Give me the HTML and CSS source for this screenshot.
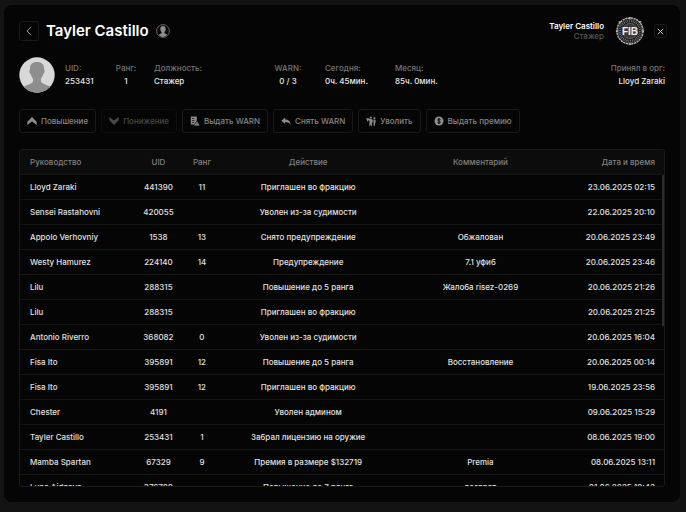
FILE: index.html
```html
<!DOCTYPE html>
<html lang="ru">
<head>
	<meta charset="utf-8">
	<meta name="viewport" content="width=device-width, initial-scale=1">
	<title>Tayler Castillo</title>
	<link rel="stylesheet" href="styles.css">
</head>
<body>
	<main class="panel">
		<!-- top line: back button, name, current user -->
		<header class="top">
			<button class="square back" type="button" aria-label="Назад">
				<svg width="8" height="10" viewBox="0 0 8 10"><path d="M6 1L2 5l4 4" fill="none" stroke="#999" stroke-width="1"/></svg>
			</button>
			<h1 class="title">Tayler Castillo</h1>
			<svg class="badge" width="14" height="14" viewBox="0 0 14 14">
				<circle cx="7" cy="7" r="6.4" fill="none" stroke="#666" stroke-width="1"/>
				<path d="M7 2c2 0 2.9 1.300 2.700 3.200-.1 1.400-.6 2.300-1.200 2.900v1.200l2.700 1.300c-1 1.500-2.500 2.400-4.200 2.400s-3.200-.9-4.200-2.400l2.700-1.300V8.100c-.6-.6-1.100-1.500-1.200-2.900C4.100 3.300 5 2 7 2z" fill="#8d8d8d"/>
			</svg>
			<div class="me">
				<div class="me-name">Tayler Castillo</div>
				<div class="me-rank">Стажер</div>
			</div>
			<svg class="emblem" width="30" height="30" viewBox="0 0 30 30">
				<circle cx="15" cy="15" r="13" fill="none" stroke="#b4b4b4" stroke-width="1.500" stroke-dasharray="2.200 .6"/>
				<circle cx="15" cy="15" r="11.600" fill="#111" stroke="#777" stroke-width=".6"/>
				<circle cx="15" cy="15" r="9.800" fill="none" stroke="#8a8a8a" stroke-width="2" stroke-dasharray=".8 1"/>
				<circle cx="15" cy="15" r="7.600" fill="#3a3a3a" stroke="#999" stroke-width="1" stroke-dasharray="1 .7"/>
				<path d="M15 .5l1.200 2h-2.400zM15 29.500l1.200-2h-2.400zM.5 15l2-1.200v2.400zM29.500 15l-2-1.200v2.400zM3 6l2-1 1 2zM27 6l-2-1-1 2z" fill="#ccc"/>
				<text class="emblem-text" x="15" y="19" text-anchor="middle">FIB</text>
			</svg>
			<button class="square close" type="button" aria-label="Закрыть">
				<svg width="7" height="7" viewBox="0 0 7 7"><path d="M.8.8l5.400 5.400M6.200.8L.8 6.200" stroke="#ccc" stroke-width="1"/></svg>
			</button>
		</header>

		<!-- employee info -->
		<section class="info">
			<svg class="avatar" width="36" height="36" viewBox="0 0 36 36">
				<defs><clipPath id="round"><circle cx="18" cy="18" r="17.700"/></clipPath></defs>
				<g clip-path="url(#round)">
					<path d="M0 0h36v36H0z" fill="#d8d8d8"/>
					<path d="M18 5c5 0 7.400 2.600 7 7.500.8.300.7 1.500.4 2.700-.2.900-.6 1.700-1.200 1.800-.4 2-1.200 3.500-2.200 4.600v3c.5 2 5 3.200 9 4.900V37H5v-7.500c4-1.700 8.500-2.900 9-4.900v-3c-1-1.100-1.800-2.600-2.200-4.600-.6-.1-1-.9-1.200-1.800-.3-1.200-.4-2.400.4-2.700-.4-4.900 2-7.500 7-7.500z" fill="#8e8e8e"/>
				</g>
			</svg>
			<dl class="stats">
				<div class="stat uid"><dt>UID:</dt><dd>253431</dd></div>
				<div class="stat rank"><dt>Ранг:</dt><dd>1</dd></div>
				<div class="stat post"><dt>Должность:</dt><dd>Стажер</dd></div>
				<div class="stat warn"><dt>WARN:</dt><dd>0 / 3</dd></div>
				<div class="stat today"><dt>Сегодня:</dt><dd>0ч. 45мин.</dd></div>
				<div class="stat month"><dt>Месяц:</dt><dd>85ч. 0мин.</dd></div>
				<div class="stat invited"><dt>Принял в орг:</dt><dd>Lloyd Zaraki</dd></div>
			</dl>
		</section>

		<!-- actions -->
		<nav class="actions">
			<button class="action" type="button">
				<svg width="10" height="10" viewBox="0 0 10 10"><path d="M5 1l4.700 4.700V9L5 5.600.3 9V5.700z" fill="#8b8b8b"/></svg>
				Повышение
			</button>
			<button class="action" type="button" disabled>
				<svg width="10" height="10" viewBox="0 0 10 10"><path d="M5 9L.3 4.300V1L5 4.400 9.700 1v3.300z" fill="#8b8b8b"/></svg>
				Понижение
			</button>
			<button class="action" type="button">
				<svg width="10" height="10" viewBox="0 0 10 10"><path d="M.8.500h6v4.300L4.500 8.500H.8z" fill="#8b8b8b"/><path d="M2 2.500h2M2 4.500h2.500M2 6.500h2" stroke="#050505" stroke-width=".7"/><path d="M6.900 4.700L10 9.800H3.800z" fill="#999" stroke="#050505" stroke-width=".5"/><path d="M6.900 6.500v1.500M6.900 8.500v.6" stroke="#050505" stroke-width=".6"/></svg>
				Выдать WARN
			</button>
			<button class="action" type="button">
				<svg width="10" height="10" viewBox="0 0 10 10"><path d="M4.200 1.500v2C7.500 3.500 9.500 5.500 9.600 9 8.500 7 7 6.100 4.200 6.100v2L.3 4.800z" fill="#8b8b8b"/></svg>
				Снять WARN
			</button>
			<button class="action" type="button">
				<svg width="10" height="10" viewBox="0 0 10 10"><circle cx="4.800" cy="1.500" r="1.100" fill="#8b8b8b"/><path d="M.2 2.200h2.500L4 3h1.600l1.100 1v2.200h-.6V9.800H5V6.900L4.300 9.800H3.100l.5-5.100L2.200 4.200v1H1V3.500H.2zM7.500 1.200h1.800v2.200H7.500zM7.400 4h2.100v3H9v2.800H7.700z" fill="#8b8b8b"/></svg>
				Уволить
			</button>
			<button class="action" type="button">
				<svg width="10" height="10" viewBox="0 0 10 10"><circle cx="5" cy="5" r="4.500" fill="#8b8b8b"/><path d="M6.500 3.400C5.900 2.800 3.700 2.700 3.700 4c0 1.200 2.700.8 2.700 2 0 1.300-2.200 1.200-2.900.5M5 2v6" fill="none" stroke="#050505" stroke-width=".9"/></svg>
				Выдать премию
			</button>
		</nav>

		<!-- history -->
		<section class="history">
			<table class="log">
				<thead>
					<tr><th class="c-name">Руководство</th><th class="c-uid">UID</th><th class="c-rank">Ранг</th><th class="c-act">Действие</th><th class="c-note">Комментарий</th><th class="c-date">Дата и время</th></tr>
				</thead>
				<tbody>
					<tr><td>Lloyd Zaraki</td><td>441390</td><td>11</td><td>Приглашен во фракцию</td><td></td><td>23.06.2025 02:15</td></tr>
					<tr><td>Sensei Rastahovni</td><td>420055</td><td></td><td>Уволен из-за судимости</td><td></td><td>22.06.2025 20:10</td></tr>
					<tr><td>Appolo Verhovniy</td><td>1538</td><td>13</td><td>Снято предупреждение</td><td>Обжалован</td><td>20.06.2025 23:49</td></tr>
					<tr><td>Westy Hamurez</td><td>224140</td><td>14</td><td>Предупреждение</td><td>7.1 уфиб</td><td>20.06.2025 23:46</td></tr>
					<tr><td>Lilu</td><td>288315</td><td></td><td>Повышение до 5 ранга</td><td>Жалоба risez-0269</td><td>20.06.2025 21:26</td></tr>
					<tr><td>Lilu</td><td>288315</td><td></td><td>Приглашен во фракцию</td><td></td><td>20.06.2025 21:25</td></tr>
					<tr><td>Antonio Riverro</td><td>368082</td><td>0</td><td>Уволен из-за судимости</td><td></td><td>20.06.2025 16:04</td></tr>
					<tr><td>Fisa Ito</td><td>395891</td><td>12</td><td>Повышение до 5 ранга</td><td>Восстановление</td><td>20.06.2025 00:14</td></tr>
					<tr><td>Fisa Ito</td><td>395891</td><td>12</td><td>Приглашен во фракцию</td><td></td><td>19.06.2025 23:56</td></tr>
					<tr><td>Chester</td><td>4191</td><td></td><td>Уволен админом</td><td></td><td>09.06.2025 15:29</td></tr>
					<tr><td>Tayler Castillo</td><td>253431</td><td>1</td><td>Забрал лицензию на оружие</td><td></td><td>08.06.2025 19:00</td></tr>
					<tr><td>Mamba Spartan</td><td>67329</td><td>9</td><td>Премия в размере $132719</td><td>Premia</td><td>08.06.2025 13:11</td></tr>
					<tr><td>Luna Aidzava</td><td>376780</td><td></td><td>Повышение до 7 ранга</td><td>возврат</td><td>01.06.2025 18:43</td></tr>
				</tbody>
			</table>
			<div class="thumb"></div>
		</section>
	</main>
</body>
</html>
```

FILE: styles.css
```css
* {
	box-sizing: border-box;
}
body {
	margin: 0;
	height: 100vh;
	padding: 5px 6px 10px 4px;
	background-color: #131313;
	color: #e0e0e0;
	font-family: Inter, Roboto, sans-serif;
	font-size: 8px;
	font-weight: 500;
	line-height: 12px;
	overflow: hidden;
}
svg {
	display: block;
	flex: none;
}
button {
	font: inherit;
	color: inherit;
	background: none;
	cursor: pointer;
}
/* dark window */
.panel {
	display: flex;
	flex-direction: column;
	height: 100%;
	padding: 10px 15px 15px;
	border-radius: 8px;
	background-color: #050505;
}
/* top line */
.top {
	display: flex;
	align-items: center;
	height: 32px;
	margin-right: -2px;
}
.square {
	display: flex;
	align-items: center;
	justify-content: center;
	padding: 0;
	border: 1px solid #1a1a1a;
	border-radius: 3px;
}
.back {
	width: 20px;
	height: 20px;
}
.close {
	width: 13px;
	height: 14px;
	margin-left: 9px;
}
.title {
	margin: 0 7px;
	font-size: 15px;
	line-height: 20px;
	font-weight: 600;
	color: #fff;
}
.me {
	margin-left: auto;
	text-align: right;
	line-height: 10px;
}
.me-name {
	font-weight: 600;
	color: #fff;
}
.me-rank {
	color: #555;
}
.emblem {
	margin-left: 11px;
}
.emblem-text {
	font-family: "Liberation Sans", sans-serif;
	font-size: 10px;
	font-weight: bold;
	fill: #eee;
}
/* avatar and stats */
.info {
	display: flex;
	align-items: center;
	height: 36px;
	margin-top: 10px;
}
.stats {
	display: flex;
	flex: 1;
	margin: 0 0 0 10px;
	line-height: 13px;
}
.stat dt {
	color: #747474;
}
.stat dd {
	margin: 0;
	color: #e8e8e8;
}
.rank, .warn {
	text-align: center;
}
.uid {
	width: 50px;
}
.rank {
	width: 22px;
}
.post {
	width: 120px;
	margin-left: 17px;
}
.warn {
	width: 28px;
}
.today {
	width: 70px;
	margin-left: 23px;
}
.invited {
	margin-left: auto;
	text-align: right;
}
/* action buttons */
.actions {
	display: flex;
	gap: 5px;
	margin-top: 16px;
}
.action {
	display: flex;
	align-items: center;
	gap: 4px;
	height: 24px;
	padding: 0 7px;
	border: 1px solid #191919;
	border-radius: 3px;
	color: #858585;
	white-space: nowrap;
}
.action:disabled {
	opacity: 0.5;
	cursor: default;
}
/* history table */
.history {
	position: relative;
	flex: 1;
	min-height: 0;
	margin-top: 16px;
	border: 1px solid #191919;
	border-radius: 3px;
	overflow: hidden;
}
.log {
	width: 100%;
	table-layout: fixed;
	border-spacing: 0;
}
.log th, .log td {
	height: 25px;
	padding: 0;
	border-bottom: 1px solid #151515;
	text-align: center;
	font-weight: 500;
	white-space: nowrap;
}
.log th {
	background-color: #0c0c0c;
	color: #808080;
}
.log th:first-child, .log td:first-child {
	padding-left: 10px;
	text-align: left;
}
.log th:last-child, .log td:last-child {
	padding-right: 9px;
	text-align: right;
}
.c-name {
	width: 18%;
}
.c-uid {
	width: 7%;
}
.c-rank {
	width: 6.5%;
}
.c-act {
	width: 26.5%;
}
.c-note {
	width: 27%;
}
/* scroll thumb over the rows */
.thumb {
	position: absolute;
	top: 25px;
	right: 0;
	width: 2px;
	height: 45%;
	background-color: #2c2c2c;
}
```
